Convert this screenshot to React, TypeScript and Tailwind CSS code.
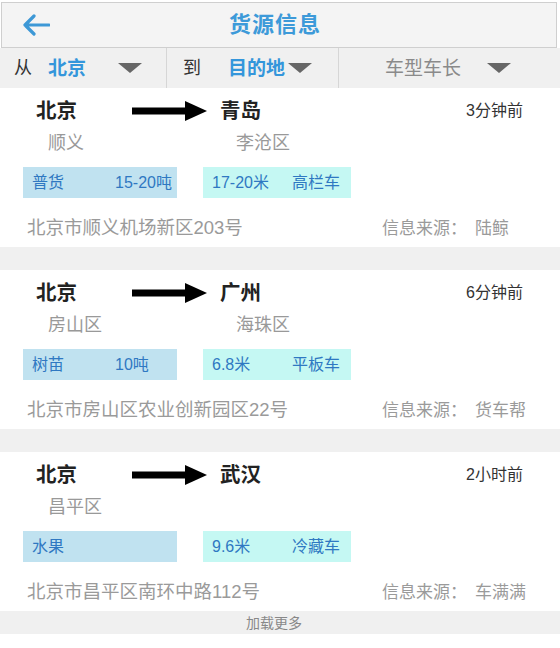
import React from "react";

const FONT = '"Liberation Sans", "Noto Sans CJK SC", sans-serif';

function Tri() {
  return (
    <svg width="24" height="10" viewBox="0 0 24 10">
      <polygon points="0,0 24,0 12,10" fill="#666666" />
    </svg>
  );
}

function RouteArrow() {
  return (
    <svg width="75" height="20" viewBox="0 0 75 20">
      <rect x="0" y="6.5" width="55" height="7" fill="#000" />
      <polygon points="53,0 75,10 53,20" fill="#000" />
    </svg>
  );
}

type Item = {
  from: string;
  to: string;
  time: string;
  fromDist: string;
  toDist: string;
  goods: string;
  weight: string;
  len: string;
  truck: string;
  addr: string;
  src: string;
};

const items: Item[] = [
  {
    from: "北京",
    to: "青岛",
    time: "3分钟前",
    fromDist: "顺义",
    toDist: "李沧区",
    goods: "普货",
    weight: "15-20吨",
    len: "17-20米",
    truck: "高栏车",
    addr: "北京市顺义机场新区203号",
    src: "陆鲸",
  },
  {
    from: "北京",
    to: "广州",
    time: "6分钟前",
    fromDist: "房山区",
    toDist: "海珠区",
    goods: "树苗",
    weight: "10吨",
    len: "6.8米",
    truck: "平板车",
    addr: "北京市房山区农业创新园区22号",
    src: "货车帮",
  },
  {
    from: "北京",
    to: "武汉",
    time: "2小时前",
    fromDist: "昌平区",
    toDist: "",
    goods: "水果",
    weight: "",
    len: "9.6米",
    truck: "冷藏车",
    addr: "北京市昌平区南环中路112号",
    src: "车满满",
  },
];

function Card({ it }: { it: Item }) {
  return (
    <div className="h-[159px] bg-white pt-[12px] flex flex-col">
      <div className="h-[22px] flex items-center pl-[36px] pr-[37px]">
        <span className="w-[96px] text-[20.5px] font-bold text-[#222] leading-none">{it.from}</span>
        <RouteArrow />
        <span className="ml-[13px] text-[20.5px] font-bold text-[#222] leading-none">{it.to}</span>
        <span className="ml-auto text-[16px] text-[#333] leading-none">{it.time}</span>
      </div>
      <div className="mt-[10px] h-[22px] flex items-center pl-[48px] text-[18px] text-[#999] leading-none">
        <span className="w-[188px]">{it.fromDist}</span>
        <span>{it.toDist}</span>
      </div>
      <div className="mt-[13px] h-[31px] flex pl-[23px] text-[16px] text-[#2f78c2] leading-none">
        <div className="w-[154px] h-full bg-[#c0e2f0] flex items-center pl-[9px]">
          <span className="w-[83px]">{it.goods}</span>
          <span>{it.weight}</span>
        </div>
        <div className="ml-[26px] w-[148px] h-full bg-[#c5f8f3] flex items-center pl-[9px]">
          <span className="w-[80px]">{it.len}</span>
          <span>{it.truck}</span>
        </div>
      </div>
      <div className="mt-[19px] h-[22px] flex items-center pl-[27px] text-[18.5px] text-[#9a9a9a] leading-none">
        <span className="w-[355px]">{it.addr}</span>
        <span className="w-[93px] text-[17px]">信息来源：</span>
        <span className="text-[17px]">{it.src}</span>
      </div>
    </div>
  );
}

export default function App() {
  return (
    <div className="w-[560px] h-[648px] bg-white overflow-hidden" style={{ fontFamily: FONT }}>
      <div className="pt-[2px]">
        <div className="ml-[1px] w-[556px] h-[46px] border border-[#cfcfcf] bg-[#f4f4f4] flex items-center">
          <div className="w-[60px] pl-[20px] flex items-center">
            <svg width="28" height="22" viewBox="0 0 28 22" fill="none">
              <path d="M27 11H3M12 2L3 11l9 9" stroke="#3d98d6" strokeWidth="3.2" strokeLinecap="round" strokeLinejoin="round" />
            </svg>
          </div>
          <div className="flex-1 text-center pr-[8px] text-[22px] font-bold text-[#3d9ad9] tracking-[1px] leading-none">
            货源信息
          </div>
          <div className="w-[60px]" />
        </div>
      </div>
      <div className="h-[40px] bg-[#f0f0f0] flex items-center text-[18px] leading-none">
        <div className="w-[166px] h-full flex items-center pl-[14px]">
          <span className="text-[#333]">从</span>
          <span className="ml-[16px] text-[19px] font-bold text-[#3496db]">北京</span>
          <span className="ml-[32px] flex"><Tri /></span>
        </div>
        <div className="w-[172px] h-full flex items-center pl-[16px] border-l border-[#d6d6d6]">
          <span className="text-[#333]">到</span>
          <span className="ml-[27px] text-[19px] font-bold text-[#3496db]">目的地</span>
          <span className="ml-[3px] flex"><Tri /></span>
        </div>
        <div className="flex-1 h-full flex items-center pl-[46px] border-l border-[#d6d6d6]">
          <span className="text-[19px] text-[#8a8a8a]">车型车长</span>
          <span className="ml-[26px] flex"><Tri /></span>
        </div>
      </div>
      <Card it={items[0]} />
      <div className="h-[23px] bg-[#f0f0f0]" />
      <Card it={items[1]} />
      <div className="h-[23px] bg-[#f0f0f0]" />
      <Card it={items[2]} />
      <div className="h-[23px] bg-[#f0f0f0] flex items-center justify-center pr-[12px] text-[14px] text-[#888] leading-none">
        加载更多
      </div>
    </div>
  );
}
